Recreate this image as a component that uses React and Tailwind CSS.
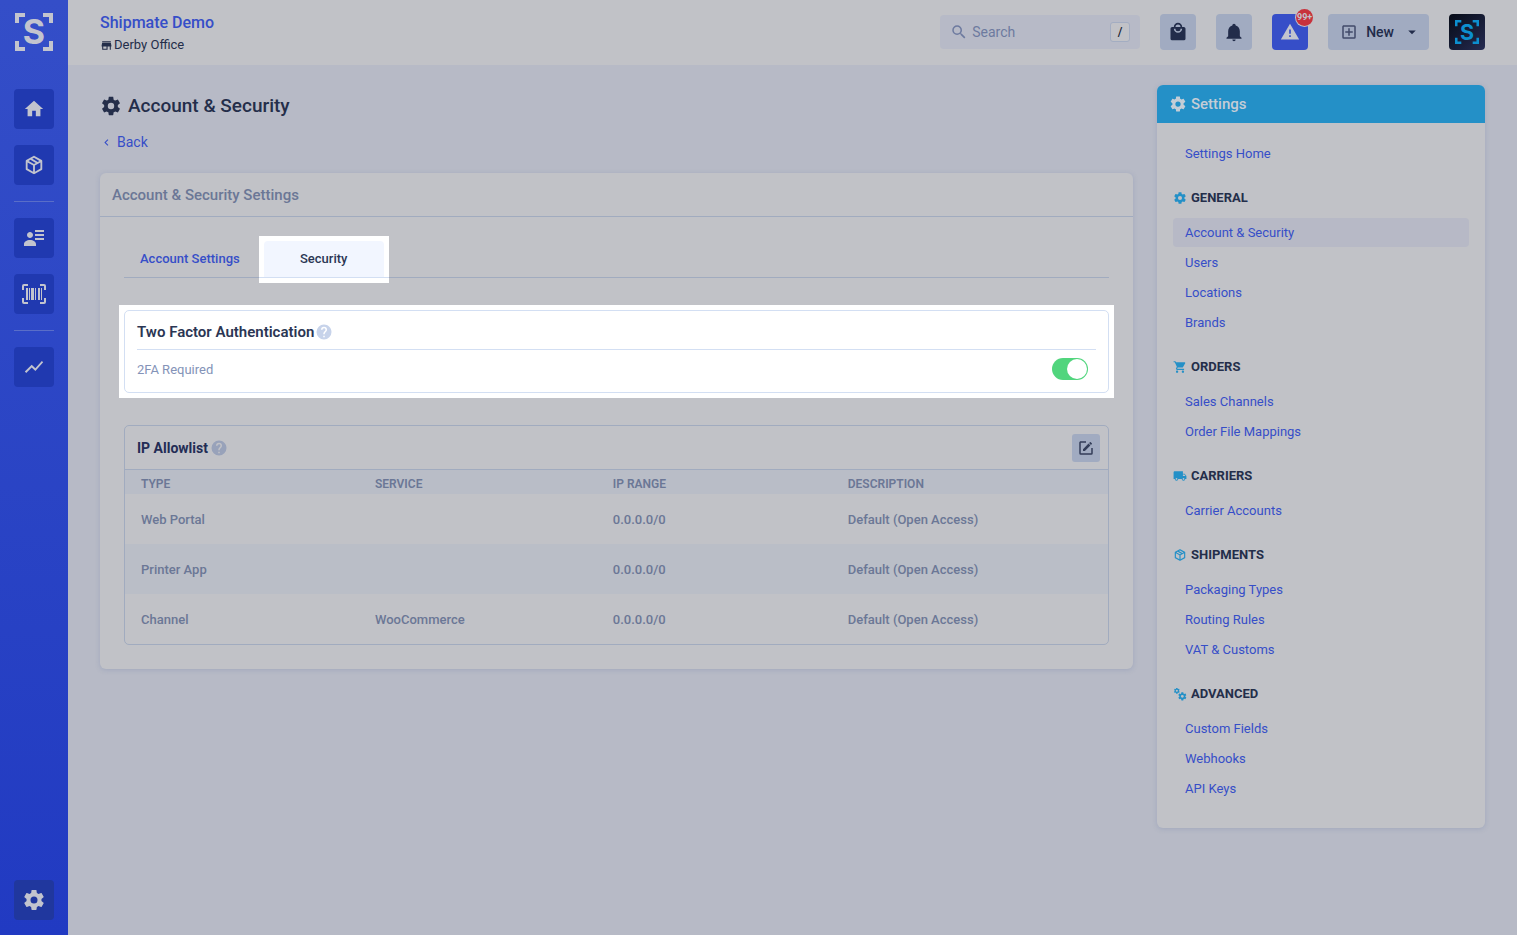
import React from 'react';

const COG =
  'M12,15.5A3.5,3.5 0 0,1 8.5,12A3.5,3.5 0 0,1 12,8.5A3.5,3.5 0 0,1 15.5,12A3.5,3.5 0 0,1 12,15.5M19.43,12.97C19.47,12.65 19.5,12.33 19.5,12C19.5,11.67 19.47,11.34 19.43,11L21.54,9.37C21.73,9.22 21.78,8.95 21.66,8.73L19.66,5.27C19.54,5.05 19.27,4.96 19.05,5.05L16.56,6.05C16.04,5.66 15.5,5.32 14.87,5.07L14.5,2.42C14.46,2.18 14.25,2 14,2H10C9.75,2 9.54,2.18 9.5,2.42L9.13,5.07C8.5,5.32 7.96,5.66 7.44,6.05L4.95,5.05C4.73,4.96 4.46,5.05 4.34,5.27L2.34,8.73C2.21,8.95 2.27,9.22 2.46,9.37L4.57,11C4.53,11.34 4.5,11.67 4.5,12C4.5,12.33 4.53,12.65 4.57,12.97L2.46,14.63C2.27,14.78 2.21,15.05 2.34,15.27L4.34,18.73C4.46,18.95 4.73,19.03 4.95,18.95L7.44,17.94C7.96,18.34 8.5,18.68 9.13,18.93L9.5,21.58C9.54,21.82 9.75,22 10,22H14C14.25,22 14.46,21.82 14.5,21.58L14.87,18.93C15.5,18.67 16.04,18.34 16.56,17.94L19.05,18.95C19.27,19.03 19.54,18.95 19.66,18.73L21.66,15.27C21.78,15.05 21.73,14.78 21.54,14.63L19.43,12.97Z';

const ICONS = {
  cog: COG,
  home: 'M10,20V14H14V20H19V12H22L12,3L2,12H5V20H10Z',
  box: 'M21,16.5C21,16.88 20.79,17.21 20.47,17.38L12.57,21.82C12.41,21.94 12.21,22 12,22C11.79,22 11.59,21.94 11.43,21.82L3.53,17.38C3.21,17.21 3,16.88 3,16.5V7.5C3,7.12 3.21,6.79 3.53,6.62L11.43,2.18C11.59,2.06 11.79,2 12,2C12.21,2 12.41,2.06 12.57,2.18L20.47,6.62C20.79,6.79 21,7.12 21,7.5V16.5M12,4.15L10.11,5.22L16,8.61L17.96,7.5L12,4.15M6.04,7.5L12,10.85L13.96,9.75L8.08,6.35L6.04,7.5M5,15.91L11,19.29V12.58L5,9.21V15.91M19,15.91V9.21L13,12.58V19.29L19,15.91Z',
  contacts:
    'M11 9C11 10.66 9.66 12 8 12C6.34 12 5 10.66 5 9C5 7.34 6.34 6 8 6C9.66 6 11 7.34 11 9M14 20H2V18C2 15.79 4.69 14 8 14C11.31 14 14 15.79 14 18V20M22 12V14H13V12H22M22 8V10H13V8H22M22 4V6H13V4H22Z',
  barcode:
    'M4,6H6V18H4V6M7,6H8V18H7V6M9,6H12V18H9V6M13,6H14V18H13V6M16,6H18V18H16V6M19,6H20V18H19V6M2,4V8H0V4A2,2 0 0,1 2,2H6V4H2M22,2A2,2 0 0,1 24,4V8H22V4H18V2H22M2,16V20H6V22H2A2,2 0 0,1 0,20V16H2M22,20V16H24V20A2,2 0 0,1 22,22H18V20H22Z',
  chart:
    'M3.5,18.49L9.5,12.48L13.5,16.48L22,6.92L20.59,5.51L13.5,13.48L9.5,9.48L2,16.99L3.5,18.49Z',
  store: 'M12,18H6V14H12M21,14V12L20,7H4L3,12V14H4V20H14V14H18V20H20V14M20,4H4V6H20V4Z',
  magnify:
    'M9.5,3A6.5,6.5 0 0,1 16,9.5C16,11.11 15.41,12.59 14.44,13.73L14.71,14H15.5L20.5,19L19,20.5L14,15.5V14.71L13.73,14.44C12.59,15.41 11.11,16 9.5,16A6.5,6.5 0 0,1 3,9.5A6.5,6.5 0 0,1 9.5,3M9.5,5C7,5 5,7 5,9.5C5,12 7,14 9.5,14C12,14 14,12 14,9.5C14,7 12,5 9.5,5Z',
  shopping:
    'M12,13A5,5 0 0,1 7,8H9A3,3 0 0,0 12,11A3,3 0 0,0 15,8H17A5,5 0 0,1 12,13M12,3A3,3 0 0,1 15,6H9A3,3 0 0,1 12,3M19,6H17A5,5 0 0,0 12,1A5,5 0 0,0 7,6H5C3.89,6 3,6.89 3,8V20A2,2 0 0,0 5,22H19A2,2 0 0,0 21,20V8C21,6.89 20.1,6 19,6Z',
  bell: 'M21,19V20H3V19L5,17V11C5,7.9 7.03,5.17 10,4.29C10,4.19 10,4.1 10,4A2,2 0 0,1 12,2A2,2 0 0,1 14,4C14,4.1 14,4.19 14,4.29C16.97,5.17 19,7.9 19,11V17L21,19M14,21A2,2 0 0,1 12,23A2,2 0 0,1 10,21',
  alert: 'M13 14H11V9H13M13 18H11V16H13M1 21H23L12 2L1 21Z',
  plusBox:
    'M19,19V5H5V19H19M19,3A2,2 0 0,1 21,5V19A2,2 0 0,1 19,21H5A2,2 0 0,1 3,19V5C3,3.89 3.9,3 5,3H19M11,7H13V11H17V13H13V17H11V13H7V11H11V7Z',
  menuDown: 'M7,10L12,15L17,10H7Z',
  chevronLeft: 'M15.41,16.58L10.83,12L15.41,7.41L14,6L8,12L14,18L15.41,16.58Z',
  help: 'M15.07,11.25L14.17,12.17C13.45,12.89 13,13.5 13,15H11V14.5C11,13.39 11.45,12.39 12.17,11.67L13.41,10.41C13.78,10.05 14,9.55 14,9C14,7.89 13.1,7 12,7A2,2 0 0,0 10,9H8A4,4 0 0,1 12,5A4,4 0 0,1 16,9C16,9.88 15.64,10.67 15.07,11.25M13,19H11V17H13M12,2A10,10 0 0,0 2,12A10,10 0 0,0 12,22A10,10 0 0,0 22,12C22,6.47 17.5,2 12,2Z',
  edit: 'M5,3C3.89,3 3,3.89 3,5V19A2,2 0 0,0 5,21H19A2,2 0 0,0 21,19V12H19V19H5V5H12V3H5M17.78,4C17.61,4 17.43,4.07 17.3,4.2L16.08,5.41L18.58,7.91L19.8,6.7C20.06,6.44 20.06,6 19.8,5.75L18.25,4.2C18.12,4.07 17.95,4 17.78,4M15.37,6.12L8,13.5V16H10.5L17.87,8.62L15.37,6.12Z',
  cart: 'M17,18C15.89,18 15,18.89 15,20A2,2 0 0,0 17,22A2,2 0 0,0 19,20C19,18.89 18.1,18 17,18M1,2V4H3L6.6,11.59L5.24,14.04C5.09,14.32 5,14.65 5,15A2,2 0 0,0 7,17H19V15H7.42A0.25,0.25 0 0,1 7.17,14.75C7.17,14.7 7.18,14.66 7.2,14.63L8.1,13H15.55C16.3,13 16.96,12.58 17.3,11.97L20.88,5.5C20.95,5.34 21,5.17 21,5A1,1 0 0,0 20,4H5.21L4.27,2M7,18C5.89,18 5,18.89 5,20A2,2 0 0,0 7,22A2,2 0 0,0 9,20C9,18.89 8.1,18 7,18Z',
  truck:
    'M18,18.5A1.5,1.5 0 0,1 16.5,17A1.5,1.5 0 0,1 18,15.5A1.5,1.5 0 0,1 19.5,17A1.5,1.5 0 0,1 18,18.5M19.5,9.5L21.46,12H17V9.5M6,18.5A1.5,1.5 0 0,1 4.5,17A1.5,1.5 0 0,1 6,15.5A1.5,1.5 0 0,1 7.5,17A1.5,1.5 0 0,1 6,18.5M20,8H17V4H3C1.89,4 1,4.89 1,6V17H3A3,3 0 0,0 6,20A3,3 0 0,0 9,17H15A3,3 0 0,0 18,20A3,3 0 0,0 21,17H23V12L20,8Z',
};

function Icon({ name, className }) {
  return (
    <svg viewBox="0 0 24 24" fill="currentColor" aria-hidden="true" className={`shrink-0 ${className}`}>
      {name === 'cogs' ? (
        <>
          <path d={COG} transform="translate(0.6 0.6) scale(0.5)" />
          <path d={COG} transform="translate(7.6 7.6) scale(0.7)" />
        </>
      ) : (
        <path d={ICONS[name]} />
      )}
    </svg>
  );
}

function Logo({ className }) {
  return (
    <svg viewBox="0 0 38 38" role="img" aria-label="Shipmate" className={`overflow-visible ${className}`}>
      <path
        fill="currentColor"
        d="M0 0H10V4H4V10H0ZM28 0H38V10H34V4H28ZM0 28H4V34H10V38H0ZM34 28H38V38H28V34H34Z"
      />
      <text x="19" y="31" textAnchor="middle" fill="currentColor" className="font-['Inter'] text-[34px] font-bold">
        S
      </text>
    </svg>
  );
}

function NavButton({ icon, label, size = 'size-[22px]', tone = 'bg-[#2039b0]' }) {
  return (
    <button type="button" aria-label={label} className={`flex size-10 items-center justify-center rounded text-[#c2c4ce] ${tone}`}>
      <Icon name={icon} className={size} />
    </button>
  );
}

function Sidebar() {
  return (
    <nav aria-label="Main" className="flex w-[68px] shrink-0 flex-col items-center bg-linear-to-b from-[#344ec8] to-[#213ac2] pt-[13px] pb-[15px]">
      <Logo className="mb-[38px] size-[38px] text-[#c2c4ce]" />
      <div className="flex flex-1 flex-col gap-4">
        <NavButton icon="home" label="Home" />
        <NavButton icon="box" label="Shipments" />
        <hr className="border-[#5a6ec8]" />
        <NavButton icon="contacts" label="Contacts" size="size-6" />
        <NavButton icon="barcode" label="Scan" size="size-6" />
        <hr className="border-[#5a6ec8]" />
        <NavButton icon="chart" label="Reports" />
      </div>
      <NavButton icon="cog" label="Settings" size="size-6" tone="bg-[#20379e]" />
    </nav>
  );
}

function Header() {
  return (
    <header className="flex h-[65px] items-center justify-between bg-[#c1c2c7] px-8 pb-px">
      <div className="pt-0.5">
        <a href="#home" className="block text-base leading-6 font-medium text-[#364ec8]">Shipmate Demo</a>
        <p className="flex items-center gap-px text-[13px] leading-5 text-[#242e4a]">
          <Icon name="store" className="size-[13px]" />
          Derby Office
        </p>
      </div>
      <div className="flex items-center gap-5">
        <div className="flex h-[34px] w-[200px] items-center rounded bg-[#b7bac7] px-[10px]">
          <label htmlFor="search" className="text-[#6d7a9f]">
            <Icon name="magnify" className="size-[18px]" />
          </label>
          <input
            id="search"
            type="text"
            aria-label="Search"
            placeholder="Search"
            className="h-7 min-w-0 flex-1 bg-transparent px-1 text-sm text-[#242e4a] outline-none placeholder:text-[#6d7a9f]"
          />
          <kbd className="flex size-5 items-center justify-center rounded-[3px] border border-[#a3adc2] bg-[#c1c2c7] font-['Roboto'] text-xs font-medium text-[#151b2e]">/</kbd>
        </div>
        <button type="button" aria-label="Orders" className="flex size-9 items-center justify-center rounded bg-[#a1abc1] text-[#222c4a]">
          <Icon name="shopping" className="size-5" />
        </button>
        <button type="button" aria-label="Notifications" className="flex size-9 items-center justify-center rounded bg-[#a1abc1] text-[#222c4a]">
          <Icon name="bell" className="size-5" />
        </button>
        <button type="button" aria-label="Alerts" className="relative flex size-9 items-center justify-center rounded bg-[#364ec8] text-[#c2c4ce]">
          <Icon name="alert" className="size-5" />
          <span className="absolute -top-[5px] -right-[5px] flex size-[17px] items-center justify-center rounded-full bg-[#c8323c] text-[9px] font-bold ring-1 ring-[#c1c2c7]">
            99+
          </span>
        </button>
        <button type="button" className="flex h-9 items-center rounded bg-[#a1abc1] pr-2 pl-3 text-sm font-medium text-[#222c4a]">
          <Icon name="plusBox" className="mr-2 size-[18px] text-[#414b69]" />
          New
          <Icon name="menuDown" className="ml-[9px] size-[18px]" />
        </button>
        <button type="button" aria-label="Profile" className="flex size-9 items-center justify-center rounded bg-linear-to-br from-[#070c18] to-[#262b52] text-[#0c8fd0]">
          <Logo className="size-6" />
        </button>
      </div>
    </header>
  );
}

function Tabs() {
  return (
    <div role="tablist" className="flex h-[37px] gap-2 border-b border-[#a1abbf]">
      <button type="button" role="tab" aria-selected="false" className="px-4 text-[13px] font-medium text-[#364ec8]">
        Account Settings
      </button>
      <div className="relative -mx-[5px] -mt-[5px] -mb-[6px] bg-white pt-[5px] pb-[5px]">
        <div className="border-b border-[#d3dff3] px-[5px]">
          <button type="button" role="tab" aria-selected="true" className="h-9 w-[120px] rounded-t bg-[#f2f6ff] text-[13px] font-medium text-[#2b3654]">
            Security
          </button>
        </div>
      </div>
    </div>
  );
}

function TwoFactor() {
  return (
    <div className="-m-[5px] bg-white p-[5px]">
      <section className="rounded-[5px] border border-[#d3dff3] px-3 pb-3">
        <h3 className="flex h-[39px] items-center gap-px border-b border-[#d3dff3] pt-1 text-[15px] font-semibold text-[#2b3654]">
          Two Factor Authentication
          <Icon name="help" className="size-[18px] text-[#c7d3ea]" />
        </h3>
        <div className="flex items-center justify-between pt-2 pr-2">
          <label htmlFor="two-factor" className="pt-0.5 text-[13px] text-[#8493b8]">2FA Required</label>
          <input
            id="two-factor"
            type="checkbox"
            role="switch"
            defaultChecked
            className="h-[22px] w-9 appearance-none rounded-full bg-[#a3adc2] p-px before:block before:size-5 before:rounded-full before:bg-white checked:bg-[#51d57d] checked:before:ml-auto"
          />
        </div>
      </section>
    </div>
  );
}

const ROWS = [
  ['Web Portal', '', '0.0.0.0/0', 'Default (Open Access)'],
  ['Printer App', '', '0.0.0.0/0', 'Default (Open Access)'],
  ['Channel', 'WooCommerce', '0.0.0.0/0', 'Default (Open Access)'],
];

function Allowlist() {
  return (
    <section className="overflow-hidden rounded-[5px] border border-[#a1abbf]">
      <div className="flex h-11 items-center justify-between border-b border-[#a1abbf] pr-2 pl-3">
        <h3 className="flex items-center gap-[2px] text-sm font-bold text-[#232c55]">
          IP Allowlist
          <Icon name="help" className="size-[18px] text-[#98a2ba]" />
        </h3>
        <button type="button" aria-label="Edit allowlist" className="flex size-7 items-center justify-center rounded-[3px] bg-[#a1abc1] text-[#333d58]">
          <Icon name="edit" className="size-[18px]" />
        </button>
      </div>
      <table className="w-full table-fixed text-left text-[#6b7796]">
        <colgroup>
          <col className="w-[23.8%]" />
          <col className="w-[24.2%]" />
          <col className="w-[23.9%]" />
          <col />
        </colgroup>
        <thead>
          <tr className="h-6 bg-[#b9bdc7] text-xs">
            <th className="px-4 pt-1 font-semibold">TYPE</th>
            <th className="px-4 pt-1 font-semibold">SERVICE</th>
            <th className="px-4 pt-1 font-semibold">IP RANGE</th>
            <th className="px-4 pt-1 font-semibold">DESCRIPTION</th>
          </tr>
        </thead>
        <tbody>
          {ROWS.map((row) => (
            <tr key={row[0]} className="h-[50px] text-[13px] font-medium even:bg-[#babec7]">
              {row.map((cell, i) => (
                <td key={i} className="px-4 pt-0.5">{cell}</td>
              ))}
            </tr>
          ))}
        </tbody>
      </table>
    </section>
  );
}

const GROUPS = [
  { title: 'GENERAL', icon: 'cog', items: ['Account & Security', 'Users', 'Locations', 'Brands'] },
  { title: 'ORDERS', icon: 'cart', items: ['Sales Channels', 'Order File Mappings'] },
  { title: 'CARRIERS', icon: 'truck', items: ['Carrier Accounts'] },
  { title: 'SHIPMENTS', icon: 'box', items: ['Packaging Types', 'Routing Rules', 'VAT & Customs'] },
  { title: 'ADVANCED', icon: 'cogs', items: ['Custom Fields', 'Webhooks', 'API Keys'] },
];

function SettingsLink({ active, children }) {
  return (
    <a
      href="#settings"
      aria-current={active ? 'page' : undefined}
      className={`flex h-[29px] items-center rounded px-3 text-[13px] text-[#364ec8] ${active ? 'bg-[#b7b9c6]' : ''}`}
    >
      {children}
    </a>
  );
}

function SettingsMenu() {
  return (
    <aside className="w-[328px] shrink-0 overflow-hidden rounded-md bg-[#c1c2c7] shadow-[0_1px_5px_rgba(110,125,170,0.3)]">
      <h2 className="flex h-[38px] items-center gap-1 bg-[#2490c7] px-3 text-[15px] font-medium text-[#c5cdd6]">
        <Icon name="cog" className="size-[18px]" />
        Settings
      </h2>
      <nav aria-label="Settings" className="px-4 pt-4 pb-[25px]">
        <SettingsLink>Settings Home</SettingsLink>
        {GROUPS.map((group) => (
          <section key={group.title}>
            <h3 className="mt-5 mb-[10px] flex h-5 items-center gap-1 text-[13px] font-bold text-[#242e4a]">
              <Icon name={group.icon} className="size-[14px] text-[#2490c7]" />
              {group.title}
            </h3>
            <div className="flex flex-col gap-px">
              {group.items.map((item) => (
                <SettingsLink key={item} active={item === 'Account & Security'}>{item}</SettingsLink>
              ))}
            </div>
          </section>
        ))}
      </nav>
    </aside>
  );
}

export default function App() {
  return (
    <div className="flex min-h-screen bg-[#b7bac6] font-['Roboto',sans-serif]">
      <Sidebar />
      <div className="min-w-0 flex-1">
        <Header />
        <div className="flex items-start gap-6 px-8 pt-5">
          <main className="min-w-0 flex-1">
            <h1 className="flex h-10 items-center gap-[6px] pt-0.5 text-[19px] font-medium text-[#242e4a]">
              <Icon name="cog" className="size-[22px]" />
              Account &amp; Security
            </h1>
            <a href="#back" className="mt-[7px] mb-[21px] inline-flex h-5 items-center gap-1 align-top text-sm text-[#364ec8]">
              <Icon name="chevronLeft" className="size-[13px]" />
              Back
            </a>
            <section className="rounded-md bg-[#c1c2c7] shadow-[0_1px_5px_rgba(110,125,170,0.3)]">
              <h2 className="flex h-11 items-center border-b border-[#a1abbf] px-3 pt-0.5 text-[15px] font-medium text-[#6b7796]">
                Account &amp; Security Settings
              </h2>
              <div className="flex flex-col gap-8 p-6">
                <Tabs />
                <TwoFactor />
                <Allowlist />
              </div>
            </section>
          </main>
          <SettingsMenu />
        </div>
      </div>
    </div>
  );
}
